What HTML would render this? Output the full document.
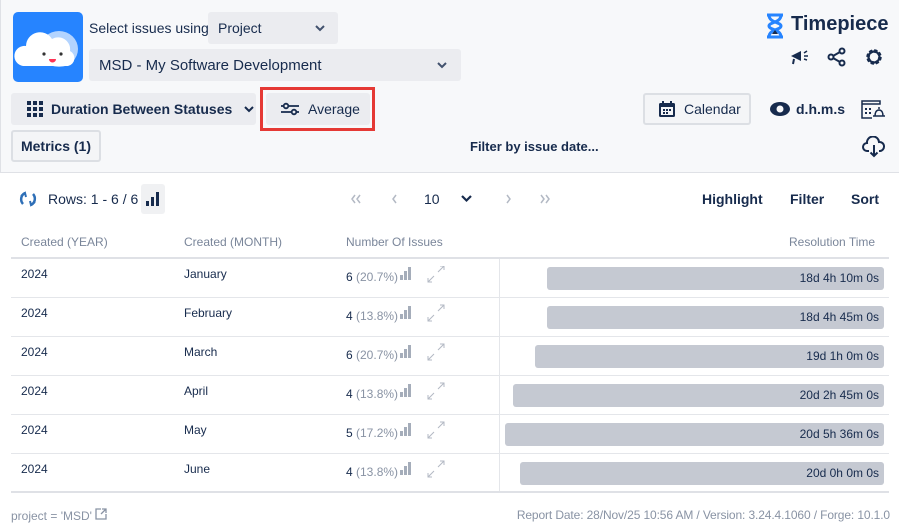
<!DOCTYPE html>
<html><head><meta charset="utf-8"><style>
*{box-sizing:border-box;margin:0;padding:0}
body{width:899px;height:531px;overflow:hidden;font-family:"Liberation Sans","DejaVu Sans",sans-serif;color:#172b4d;background:#fff;position:relative;font-size:13px}
.a{position:absolute}
.top{left:0;top:0;width:899px;height:173px;background:#f7f8fa;border-bottom:1px solid #dfe1e6;border-left:1px solid #dfe1e6}
.btn{position:absolute;background:#ebecf0;border-radius:3px;font-size:14px;display:flex;align-items:center}
.obtn{position:absolute;background:#f4f5f7;border:2px solid #dcdfe4;border-radius:3px;font-size:14px;display:flex;align-items:center;font-weight:bold}
.b{font-weight:bold}
.hd{color:#7a869a;font-size:12px;top:235px}
.row{position:absolute;left:11px;width:878px;height:39px;border-bottom:1px solid #e4e6ea;font-size:12px}
.row span{position:absolute;top:8px}
.bar{position:absolute;top:8px;right:5px;height:23px;background:#c5c9d2;border-radius:3px;text-align:right;padding-right:5px;line-height:23px;font-size:12px}
.num{left:335px;top:11px!important}
.gr{color:#8993a4;font-style:normal}
.chev{position:absolute}
</style></head><body>
<div class="a top"></div>
<div class="a" style="left:13px;top:12px;width:70px;height:70px;background:#2684ff;border-radius:5px">
<svg width="70" height="70"><ellipse cx="46" cy="37" rx="19" ry="18" fill="#b3d4ff"/><path d="M10 54 a10 10 0 0 1 3-20 a14 14 0 0 1 26-7 a12 12 0 0 1 18 12 a8 8 0 0 1 -2 15z" fill="#fff"/><circle cx="31" cy="42" r="1.6" fill="#333"/><circle cx="48" cy="42" r="1.6" fill="#333"/><path d="M36 47 h7 a3.5 3.5 0 0 1 -7 0z" fill="#ff3355"/></svg></div>
<div class="a" style="left:89px;top:20px;font-size:14px">Select issues using</div>
<div class="btn" style="left:208px;top:12px;width:130px;height:32px;padding-left:10px">Project<svg class="chev" style="right:13px;top:13px" width="10" height="7"><path d="M1 1l4 4 4-4" stroke="#42526e" stroke-width="2" fill="none"/></svg></div>
<div class="btn" style="left:89px;top:49px;width:372px;height:32px;padding-left:10px;font-size:15px">MSD - My Software Development<svg class="chev" style="right:14px;top:13px" width="10" height="7"><path d="M1 1l4 4 4-4" stroke="#42526e" stroke-width="2" fill="none"/></svg></div>
<div class="btn" style="left:11px;top:93px;width:245px;height:32px;padding-left:16px"><svg width="16" height="16"><g fill="#172b4d"><rect x="0" y="0" width="4" height="4"/><rect x="6" y="0" width="4" height="4"/><rect x="12" y="0" width="4" height="4"/><rect x="0" y="6" width="4" height="4"/><rect x="6" y="6" width="4" height="4"/><rect x="12" y="6" width="4" height="4"/><rect x="0" y="12" width="4" height="4"/><rect x="6" y="12" width="4" height="4"/><rect x="12" y="12" width="4" height="4"/></g></svg><span class="b" style="margin-left:8px">Duration Between Statuses</span><svg style="margin-left:12px" width="10" height="7"><path d="M1 1l4 4 4-4" stroke="#172b4d" stroke-width="2" fill="none"/></svg></div>
<div class="a" style="left:260px;top:87px;width:115px;height:44px;border:3px solid #e53935"></div>
<div class="btn" style="left:266px;top:93px;width:104px;height:32px;padding-left:14px"><svg width="20" height="14" fill="none" stroke="#172b4d" stroke-width="1.8"><path d="M1 4h18M1 10h18"/><circle cx="6" cy="4" r="2.3" fill="#ebecf0"/><circle cx="14" cy="10" r="2.3" fill="#ebecf0"/></svg><span style="margin-left:8px">Average</span></div>
<div class="obtn" style="left:11px;top:130px;width:90px;height:32px;justify-content:center">Metrics (1)</div>
<div class="a b" style="left:470px;top:139px;font-size:13px">Filter by issue date...</div>
<svg class="a" style="left:764px;top:12px" width="22" height="28"><path d="M3 3h16M3 25h16M5 3c0 8 12 7 12 11s-12 3-12 11M17 3c0 8-12 7-12 11s12 3 12 11" stroke="#2684ff" stroke-width="3" fill="none"/><path d="M8 22l3-4 3 4z" fill="#172b4d"/></svg>
<div class="a b" style="left:791px;top:13px;font-size:20px;color:#172b4d">Timepiece</div>
<svg class="a" style="left:789px;top:47px" width="22" height="20"><path d="M2 9l10-5v10z" fill="#172b4d"/><path d="M5 12l-1 5" stroke="#172b4d" stroke-width="2"/><path d="M15 6l3-2M15 9h4M15 12l3 1" stroke="#172b4d" stroke-width="1.5"/></svg>
<svg class="a" style="left:827px;top:47px" width="20" height="20" fill="none" stroke="#172b4d" stroke-width="2"><circle cx="15" cy="4" r="2.5"/><circle cx="4" cy="10" r="2.5"/><circle cx="15" cy="16" r="2.5"/><path d="M6 9l7-4M6 11l7 4"/></svg>
<svg class="a" style="left:864px;top:47px" width="20" height="20"><circle cx="10" cy="10" r="6" fill="none" stroke="#172b4d" stroke-width="3.5" stroke-dasharray="3 1.7"/><circle cx="10" cy="10" r="5.5" fill="none" stroke="#172b4d" stroke-width="2.2"/></svg>
<div class="obtn" style="left:643px;top:93px;width:108px;height:32px;padding-left:13px;font-weight:normal"><svg width="18" height="18"><rect x="1" y="3" width="16" height="14" rx="1.5" fill="#172b4d"/><rect x="3" y="7" width="12" height="8" fill="#f4f5f7"/><path d="M5 1v4M13 1v4" stroke="#172b4d" stroke-width="2"/><g fill="#172b4d"><rect x="5" y="9" width="2" height="2"/><rect x="8" y="9" width="2" height="2"/><rect x="11" y="9" width="2" height="2"/><rect x="5" y="12" width="2" height="2"/><rect x="8" y="12" width="2" height="2"/></g></svg><span style="margin-left:8px">Calendar</span></div>
<svg class="a" style="left:770px;top:101px" width="20" height="16"><ellipse cx="10" cy="8" rx="10" ry="7" fill="#172b4d"/><circle cx="10" cy="8" r="3.5" fill="#f7f8fa"/></svg>
<div class="a b" style="left:796px;top:101px;font-size:14px">d.h.m.s</div>
<svg class="a" style="left:861px;top:99px" width="25" height="20" fill="none" stroke="#172b4d" stroke-width="1.5"><path d="M1 2h18v3H1zM1 5v14h10"/><path d="M14 17c0-3 1-6 4-6s4 3 4 6M12 17h12M18 8v2"/><g fill="#172b4d" stroke="none"><rect x="4" y="9" width="2" height="2"/><rect x="8" y="9" width="2" height="2"/><rect x="4" y="13" width="2" height="2"/><rect x="8" y="13" width="2" height="2"/></g></svg>
<svg class="a" style="left:862px;top:136px" width="24" height="22" fill="none" stroke="#172b4d" stroke-width="2"><path d="M7 15H5a4 4 0 0 1 0-8 6 6 0 0 1 12-1 4.5 4.5 0 0 1 1 9h-1"/><path d="M12 9v11M8.5 16.5l3.5 3.5 3.5-3.5"/></svg>

<svg class="a" style="left:19px;top:190px" width="18" height="18" fill="none" stroke="#2e6fb7" stroke-width="2.5"><path d="M4 14a7 7 0 0 1 2-11M14 4a7 7 0 0 1-2 11"/><path d="M2 6l4-3 1 4M16 12l-4 3-1-4" stroke-width="2"/></svg>
<div class="a" style="left:48px;top:191px;font-size:14px">Rows: 1 - 6 / 6</div>
<div class="a" style="left:141px;top:184px;width:24px;height:30px;background:#f0f1f3;border-radius:3px"></div>
<svg class="a" style="left:146px;top:192px" width="14" height="14" fill="#172b4d"><rect x="0" y="9" width="3" height="5"/><rect x="5" y="5" width="3" height="9"/><rect x="10" y="0" width="3" height="14"/></svg>
<svg class="a" style="left:351px;top:194px" width="200" height="10" fill="none" stroke="#b3b9c4" stroke-width="1.5"><path d="M4 1L1 5l3 4M9 1L6 5l3 4M45 1l-3 4 3 4M156 1l3 4-3 4M190 1l3 4-3 4M195 1l3 4-3 4"/></svg>
<div class="a" style="left:424px;top:191px;font-size:14px">10</div>
<svg class="a" style="left:461px;top:195px" width="11" height="8"><path d="M1 1l4.5 4.5L10 1" stroke="#172b4d" stroke-width="2.2" fill="none"/></svg>
<div class="a b" style="left:702px;top:191px;font-size:14px">Highlight</div>
<div class="a b" style="left:790px;top:191px;font-size:14px">Filter</div>
<div class="a b" style="left:851px;top:191px;font-size:14px">Sort</div>
<div class="a hd" style="left:21px">Created (YEAR)</div>
<div class="a hd" style="left:184px">Created (MONTH)</div>
<div class="a hd" style="left:346px">Number Of Issues</div>
<div class="a hd" style="left:789px">Resolution Time</div>
<div class="a" style="left:11px;top:257px;width:878px;height:2px;background:#dfe1e6"></div>
<div class="a" style="left:499px;top:259px;width:1px;height:234px;background:#e4e6ea"></div>

<div class="row" style="top:259px"><span style="left:10px">2024</span><span style="left:173px">January</span><span class="num">6 <i class="gr">(20.7%)</i></span><div class="bar" style="left:536px">18d 4h 10m 0s</div></div>
<div class="row" style="top:298px"><span style="left:10px">2024</span><span style="left:173px">February</span><span class="num">4 <i class="gr">(13.8%)</i></span><div class="bar" style="left:536px">18d 4h 45m 0s</div></div>
<div class="row" style="top:337px"><span style="left:10px">2024</span><span style="left:173px">March</span><span class="num">6 <i class="gr">(20.7%)</i></span><div class="bar" style="left:524px">19d 1h 0m 0s</div></div>
<div class="row" style="top:376px"><span style="left:10px">2024</span><span style="left:173px">April</span><span class="num">4 <i class="gr">(13.8%)</i></span><div class="bar" style="left:502px">20d 2h 45m 0s</div></div>
<div class="row" style="top:415px"><span style="left:10px">2024</span><span style="left:173px">May</span><span class="num">5 <i class="gr">(17.2%)</i></span><div class="bar" style="left:494px">20d 5h 36m 0s</div></div>
<div class="row" style="top:454px;border-bottom:2px solid #dfe1e6"><span style="left:10px">2024</span><span style="left:173px">June</span><span class="num">4 <i class="gr">(13.8%)</i></span><div class="bar" style="left:509px">20d 0h 0m 0s</div></div>

<svg class="a" style="left:400px;top:266px" width="50" height="220">
<g id="ic"><g fill="#a5adba"><rect x="0" y="9" width="3" height="5"/><rect x="4" y="5" width="3" height="9"/><rect x="8" y="1" width="3" height="13"/></g><path d="M28 16l6-6M38 6l6-6M28 12v4h4M40 0h4v4" stroke="#b3b9c4" stroke-width="1" fill="none"/></g>
<use href="#ic" y="39"/><use href="#ic" y="78"/><use href="#ic" y="117"/><use href="#ic" y="156"/><use href="#ic" y="195"/>
</svg>

<div class="a" style="left:11px;top:508px;font-size:12px;color:#8993a4">project = 'MSD' <svg width="12" height="12" fill="none" stroke="#8993a4" stroke-width="1.3"><path d="M6 1H1v10h10V6M7 1h4v4M11 1L6 6"/></svg></div>
<div class="a" style="right:9px;top:508px;font-size:12px;color:#8993a4;letter-spacing:-0.12px">Report Date: 28/Nov/25 10:56 AM / Version: 3.24.4.1060 / Forge: 10.1.0</div>
</body></html>
